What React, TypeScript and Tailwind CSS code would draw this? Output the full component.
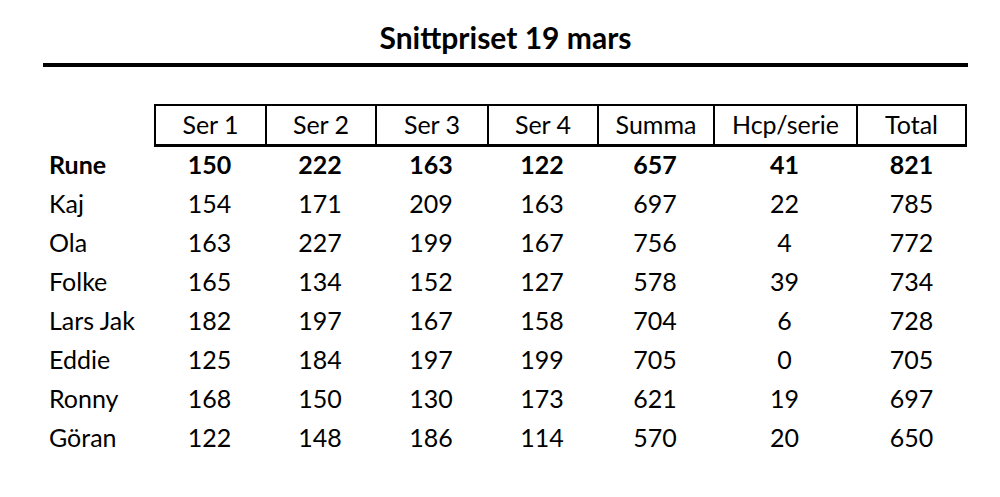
const HEADERS = ['Ser 1', 'Ser 2', 'Ser 3', 'Ser 4', 'Summa', 'Hcp/serie', 'Total'];

const ROWS: { name: string; values: number[]; bold?: boolean }[] = [
  { name: 'Rune', values: [150, 222, 163, 122, 657, 41, 821], bold: true },
  { name: 'Kaj', values: [154, 171, 209, 163, 697, 22, 785] },
  { name: 'Ola', values: [163, 227, 199, 167, 756, 4, 772] },
  { name: 'Folke', values: [165, 134, 152, 127, 578, 39, 734] },
  { name: 'Lars Jak', values: [182, 197, 167, 158, 704, 6, 728] },
  { name: 'Eddie', values: [125, 184, 197, 199, 705, 0, 705] },
  { name: 'Ronny', values: [168, 150, 130, 173, 621, 19, 697] },
  { name: 'Göran', values: [122, 148, 186, 114, 570, 20, 650] },
];

const GRID = 'grid grid-cols-[105px_111px_110px_112px_110px_116px_143px_111px]';

export default function App() {
  return (
    <div className="w-[1000px] h-[497px] bg-white text-black font-['Lato','Open_Sans',sans-serif] overflow-hidden">
      <div className="pl-[43px] pr-[32px]">
        <h1 className="pt-[19px] text-center text-[30px] leading-[36px] font-bold">Snittpriset 19 mars</h1>
        <div className="mt-[8px] h-[4px] bg-black" />
      </div>

      <div className="pl-[49px] pt-[37px]">
        <div className={`${GRID} h-[41px]`}>
          <div />
          {HEADERS.map((h, i) => (
            <div
              key={h}
              className={`flex items-center justify-center border-t-2 border-l-2 border-b-[3px] border-black text-[25px] ${
                i === HEADERS.length - 1 ? 'border-r-2' : ''
              }`}
            >
              {h}
            </div>
          ))}
        </div>

        {ROWS.map((row) => (
          <div
            key={row.name}
            className={`${GRID} h-[39px] items-center text-[25px] ${row.bold ? 'font-bold' : ''}`}
          >
            <div>{row.name}</div>
            {row.values.map((v, i) => (
              <div key={i} className="text-center">
                {v}
              </div>
            ))}
          </div>
        ))}
      </div>
    </div>
  );
}
